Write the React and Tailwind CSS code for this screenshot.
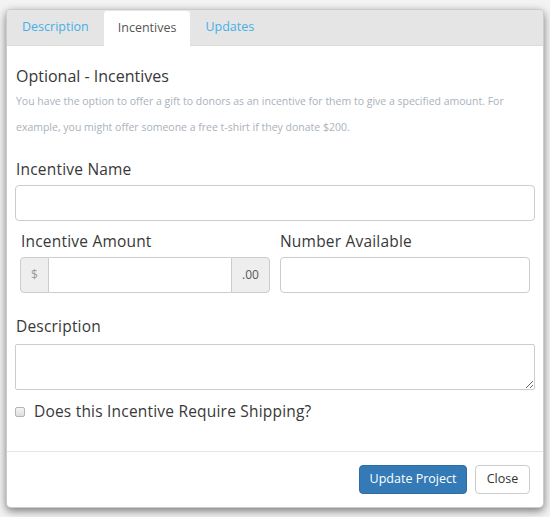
import React from 'react';

const tabs = ['Description', 'Incentives', 'Updates'];

const App = () => {
  return (
    <div
      className="w-[550px] h-[517px] bg-[#f3f3f3] pt-[9px] pl-[6px] text-[#383838]"
      style={{ fontFamily: '"Open Sans", Lato, sans-serif' }}
    >
      <div className="w-[538px] h-[499px] bg-white rounded-[5px] border border-black/20 shadow-[0_3px_9px_rgba(0,0,0,0.5)] overflow-hidden flex flex-col">
        {/* Tabs */}
        <div className="h-[36px] bg-[#e5e5e5] flex items-end border-b border-[#dcdcdc] shrink-0">
          {tabs.map((tab) => (
            <div
              key={tab}
              className={
                tab === 'Incentives'
                  ? 'h-[35px] px-[14px] flex items-center bg-white text-[#555] text-[12.5px] rounded-t-[3px] -mb-px'
                  : 'h-[35px] px-[15px] flex items-center text-[#46b0e6] text-[12.5px]'
              }
            >
              {tab}
            </div>
          ))}
        </div>

        {/* Body */}
        <div className="px-[8px] pt-[19px] flex-1">
          <h4 className="text-[16px] leading-[22px] pl-px">Optional - Incentives</h4>
          <p className="text-[10.5px] leading-[26px] text-[#a9b2bc] mt-px pl-px">
            You have the option to offer a gift to donors as an incentive for them to give a specified amount. For
            example, you might offer someone a free t-shirt if they donate $200.
          </p>

          <label className="block text-[15.5px] tracking-[0.2px] leading-[21px] mt-[19px] pl-px">Incentive Name</label>
          <input
            type="text"
            className="block w-full h-[36px] mt-[5px] border border-[#ccc] rounded-[4px] px-3 outline-none"
          />

          <div className="grid grid-cols-[250px_250px] gap-[10px] px-[5px] mt-[10px]">
            <div className="min-w-0">
              <label className="block text-[15.5px] tracking-[0.2px] leading-[21px] pl-px">Incentive Amount</label>
              <div className="flex h-[36px] mt-[5px]">
                <span className="w-[29px] shrink-0 flex items-center justify-center bg-[#eee] border border-[#ccc] rounded-l-[4px] text-[12px] text-[#999]">
                  $
                </span>
                <input
                  type="text"
                  className="flex-1 w-0 min-w-0 border-y border-[#ccc] px-3 outline-none"
                />
                <span className="w-[39px] shrink-0 flex items-center justify-center bg-[#eee] border border-[#ccc] rounded-r-[4px] text-[12px] text-[#555]">
                  .00
                </span>
              </div>
            </div>
            <div className="min-w-0">
              <label className="block text-[15.5px] tracking-[0.2px] leading-[21px]">Number Available</label>
              <input
                type="text"
                className="block w-full h-[36px] mt-[5px] border border-[#ccc] rounded-[4px] px-3 outline-none"
              />
            </div>
          </div>

          <label className="block text-[15.5px] tracking-[0.2px] leading-[21px] mt-[23px] pl-px">Description</label>
          <textarea className="block w-full h-[46px] mt-[7px] border border-[#ccc] rounded-[2px] px-3 outline-none resize-y" />

          <div className="flex items-center mt-[11px] h-[21px]">
            <input
              type="checkbox"
              className="appearance-none w-[10px] h-[10px] mr-[9px] border border-[#b5b5b5] rounded-[2px] bg-gradient-to-b from-[#f4f4f4] to-[#dedede]"
            />
            <span className="text-[15.5px] tracking-[0.2px] leading-[21px]">Does this Incentive Require Shipping?</span>
          </div>
        </div>

        {/* Footer */}
        <div className="border-t border-[#e5e5e5] pt-[13px] pb-[13px] pr-[13px] flex justify-end gap-[8px] shrink-0">
          <button className="h-[29px] w-[108px] bg-[#337ab7] border border-[#2e6da4] rounded-[4px] text-white text-[12.5px]">
            Update Project
          </button>
          <button className="h-[29px] w-[55px] bg-white border border-[#ccc] rounded-[4px] text-[#333] text-[12.5px]">
            Close
          </button>
        </div>
      </div>
    </div>
  );
};

export default App;
